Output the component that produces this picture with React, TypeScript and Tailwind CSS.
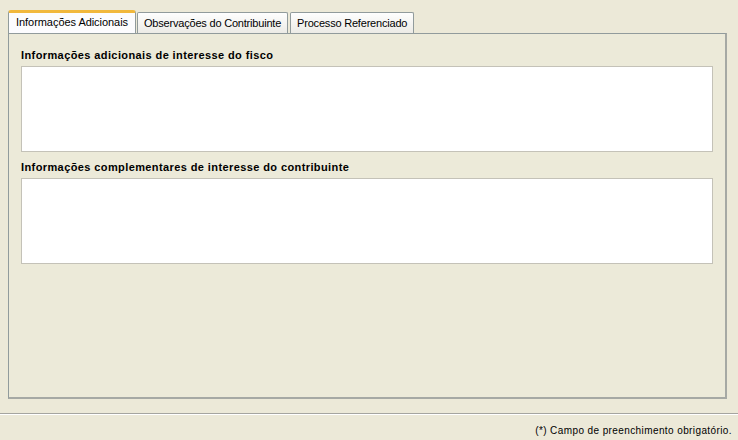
import React from 'react';

const tabs = ['Informações Adicionais', 'Observações do Contribuinte', 'Processo Referenciado'];

function Tab({ label, active }: { label: string; active?: boolean }) {
  if (active) {
    return (
      <div className="relative -mr-px z-10 h-[23px] px-[7px] flex items-center bg-[#fcfcfe] border border-b-0 border-[#919b9c] rounded-t-[3px] border-t-[3px] border-t-[#f1b83c] tracking-[-0.05px]">
        <span className="-mt-[2px]">{label}</span>
      </div>
    );
  }
  return (
    <div className="h-[21px] px-[6px] ml-[2px] flex items-center bg-gradient-to-b from-[#fefefe] to-[#ecebe6] border border-b-0 border-[#919b9c] rounded-t-[2px] tracking-[-0.2px]">
      <span>{label}</span>
    </div>
  );
}

function Field({ label }: { label: string }) {
  return (
    <div className="flex flex-col">
      <div className="h-[20px] flex items-center font-bold tracking-[0.4px]">{label}</div>
      <div className="mt-[1px] h-[86px] bg-white border border-[#c4c2b8]" />
    </div>
  );
}

export default function App() {
  return (
    <div
      className="w-[738px] h-[440px] bg-[#ece9d8] flex flex-col text-[11px] text-black overflow-hidden"
      style={{ fontFamily: '"Liberation Sans", Arial, sans-serif' }}
    >
      <div className="flex items-end pl-[8px] pt-[10px]">
        {tabs.map((t, i) => (
          <Tab key={t} label={t} active={i === 0} />
        ))}
      </div>
      <div className="ml-[8px] mr-[11px] h-[366px] bg-[#ecead9] border border-[#919b9c] border-r-[2px] border-b-[2px] border-r-[#a6a9a4] border-b-[#a6a9a4] px-[12px] pt-[11px] flex flex-col gap-[5px]">
        <Field label="Informações adicionais de interesse do fisco" />
        <Field label="Informações complementares de interesse do contribuinte" />
      </div>
      <div className="mt-[14px] border-t border-[#a5a5a0] border-b border-b-white" />
      <div className="flex-1 flex items-center justify-end pr-[6px] pt-[5px] text-[10px] tracking-[0.4px]">
        (*) Campo de preenchimento obrigatório.
      </div>
    </div>
  );
}
